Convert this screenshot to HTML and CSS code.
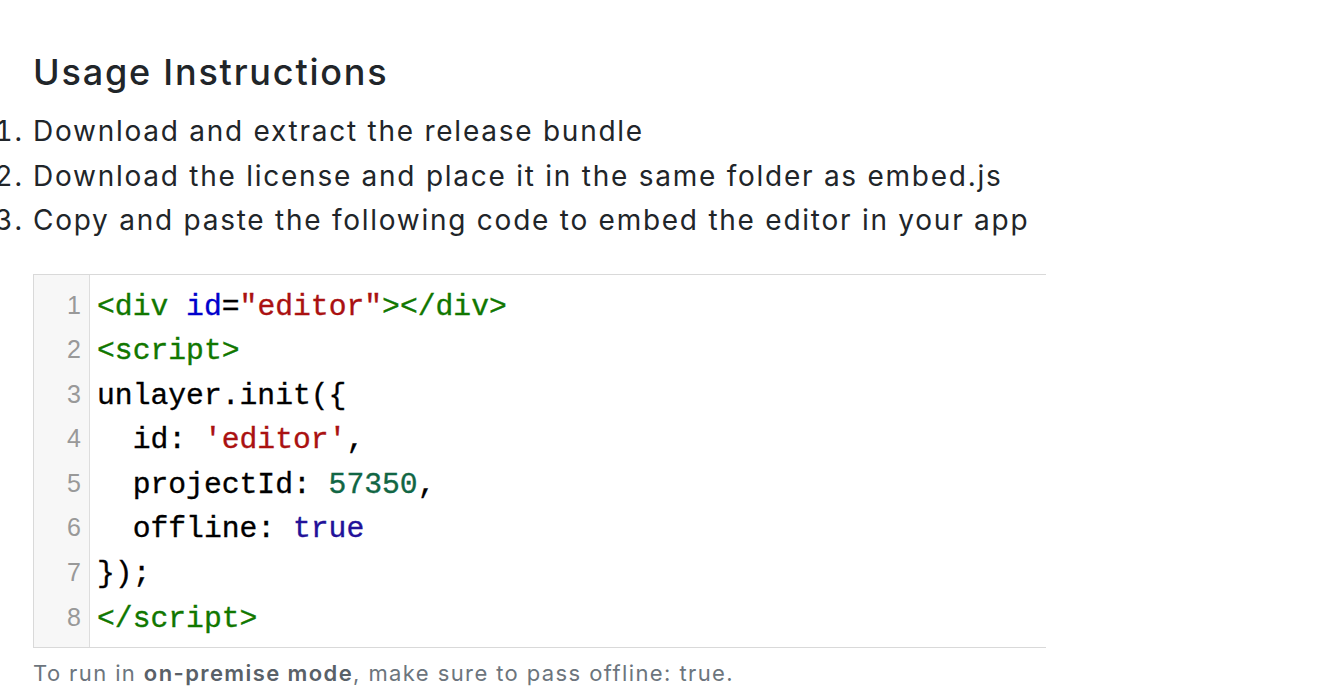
FILE: index.html
```html
<!DOCTYPE html>
<html lang="en">
<head>
<meta charset="utf-8">
<title>Usage Instructions</title>
<link rel="stylesheet" href="styles.css">
</head>
<body>
<main class="page">
  <h2 class="title">Usage Instructions</h2>
  <ol class="steps">
    <li>Download and extract the release bundle</li>
    <li>Download the license and place it in the same folder as embed.js</li>
    <li>Copy and paste the following code to embed the editor in your app</li>
  </ol>
  <div class="code">
    <div class="gutter">
      <div class="ln">1</div><div class="ln">2</div><div class="ln">3</div><div class="ln">4</div>
      <div class="ln">5</div><div class="ln">6</div><div class="ln">7</div><div class="ln">8</div>
    </div>
    <div class="lines">
      <div class="line"><span class="tag">&lt;div</span> <span class="attr">id</span>=<span class="str">"editor"</span><span class="tag">&gt;&lt;/div&gt;</span></div>
      <div class="line"><span class="tag">&lt;script&gt;</span></div>
      <div class="line">unlayer.init({</div>
      <div class="line">  id: <span class="str">'editor'</span>,</div>
      <div class="line">  projectId: <span class="num">57350</span>,</div>
      <div class="line">  offline: <span class="atom">true</span></div>
      <div class="line">});</div>
      <div class="line"><span class="tag">&lt;/script&gt;</span></div>
    </div>
  </div>
  <p class="note">To run in <strong>on-premise mode</strong>, make sure to pass offline: true.</p>
</main>
</body>
</html>
```

FILE: styles.css
```css
html, body {
  margin: 0;
  padding: 0;
  background: #ffffff;
}

.page {
  padding: 48px 0 0 33px;
  font-family: Inter, "Open Sans", sans-serif;
  color: #212529;
}

.title {
  margin: 0;
  font-size: 36px;
  font-weight: 500;
  line-height: 48px;
  letter-spacing: 1.8px;
  color: #212529;
}

.steps {
  margin: 13px 0 0 0;
  padding: 0;
  font-size: 28px;
  line-height: 44.5px;
  font-weight: 400;
  letter-spacing: 1.75px;
  color: #212529;
}

.code {
  display: flex;
  width: 1012px;
  margin-top: 31px;
  border: 1px solid #d9d9d9;
  border-right: none;
  background: #fff;
}

.gutter {
  width: 47px;
  padding: 8px 8px 8px 0;
  background: #f7f7f7;
  border-right: 1px solid #dddddd;
  text-align: right;
  font-family: "Liberation Sans", Arial, sans-serif;
  font-size: 25px;
  color: #999999;
}

.ln {
  height: 44.6px;
  line-height: 44.6px;
}

.lines {
  padding: 10px 0 6px 7px;
  font-family: "Liberation Mono", "Courier New", monospace;
  font-size: 29.7px;
  color: #000;
  -webkit-text-stroke: 0.35px currentColor;
}

.line {
  height: 44.6px;
  line-height: 44.6px;
  white-space: pre;
}

.tag { color: #117700; }
.attr { color: #0000cc; }
.str { color: #aa1111; }
.num { color: #116644; }
.atom { color: #221199; }

.note {
  margin: 10px 0 0 0;
  font-size: 22px;
  line-height: 30px;
  letter-spacing: 1.4px;
  color: #6c757d;
}

.note strong {
  font-weight: 600;
  color: #5a6168;
}
```
